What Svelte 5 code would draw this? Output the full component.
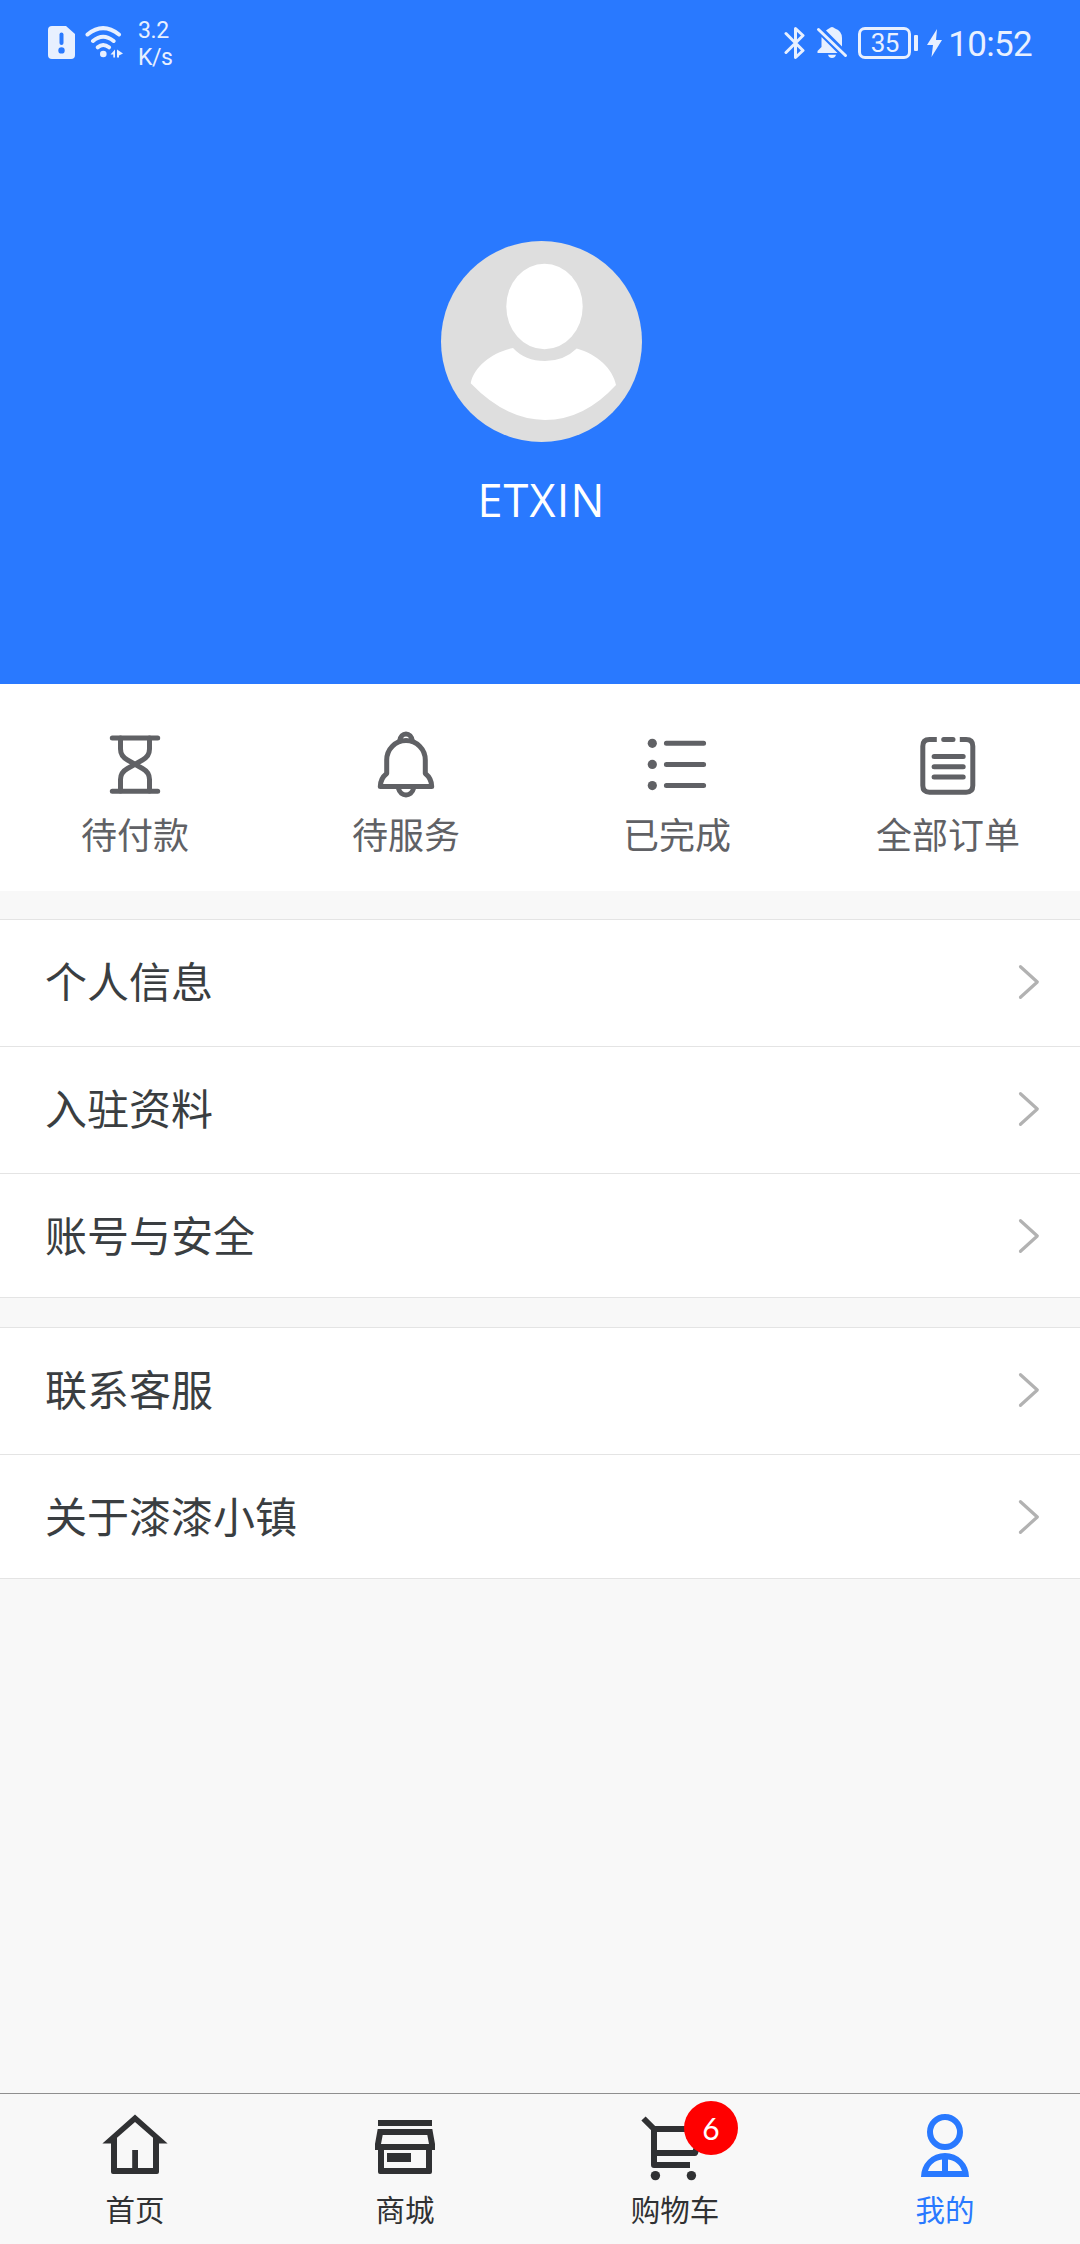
<script lang="ts">
  type Item = { icon: string; label: string };
  type Tab = Item & { badge?: number };

  const username = 'ETXIN';

  const orders: Item[] = [
    { icon: 'hourglass', label: '待付款' },
    { icon: 'bell', label: '待服务' },
    { icon: 'list', label: '已完成' },
    { icon: 'form', label: '全部订单' }
  ];

  const groups: string[][] = [
    ['个人信息', '入驻资料', '账号与安全'],
    ['联系客服', '关于漆漆小镇']
  ];

  const tabs: Tab[] = [
    { icon: 'home', label: '首页' },
    { icon: 'shop', label: '商城' },
    { icon: 'cart', label: '购物车', badge: 6 },
    { icon: 'mine', label: '我的' }
  ];

  let active = $state('mine');
</script>

{#snippet icon(name: string)}
  <svg class="icon" viewBox="0 0 72 72" width="72" height="72" aria-hidden="true">
    {#if name === 'hourglass'}
      <g class="line">
        <path d="M13.3 10H58.7M13.3 63.3H58.7" />
        <path d="M21.5 10V21C21.5 26 24 29.5 28.5 32L43.5 40.5C48 43 50.5 46.5 50.5 51.5V63M50.5 10V21C50.5 26 48 29.5 43.5 32L28.5 40.5C24 43 21.5 46.5 21.5 51.5V63" />
      </g>
    {:else if name === 'bell'}
      <g class="line">
        <path d="M16.7 32V45.5C12.3 49 10.3 52.5 10.3 58.6H61.7C61.7 52.5 59.7 49 55.3 45.5V32A19.3 19.5 0 0 0 16.7 32Z" />
        <path d="M29.7 13C30.5 3.5 41.5 3.5 42.3 13M28.5 60.5C30.5 69 41.5 69 43.5 60.5" />
      </g>
    {:else if name === 'list'}
      <g fill="currentColor">
        <circle cx="11.3" cy="15.3" r="4.6" />
        <circle cx="11.3" cy="36.4" r="4.6" />
        <circle cx="11.3" cy="57.6" r="4.6" />
      </g>
      <path class="line" d="M25.4 15.3H62.6M25.4 36.4H62.6M25.4 57.6H62.6" />
    {:else if name === 'form'}
      <path class="line butt" d="M24.8 11.5H17.5Q10.8 11.5 10.8 18.2V57.5Q10.8 64.2 17.5 64.2H54.1Q60.8 64.2 60.8 57.5V18.2Q60.8 11.5 54.1 11.5H47.8" />
      <path class="line" d="M31.7 11.5H41M22.1 28.6H51.2M22.1 38.8H51.2M22.1 49.1H51.2" />
    {:else if name === 'home'}
      <path
        fill="currentColor"
        fill-rule="evenodd"
        d="M36 4.6L68.6 33.4H60V62Q60 64 58 64H14Q12 64 12 62V33.4H3.4ZM36 12L18 27.8V58H33.2V40H39V58H54V27.8Z"
      />
    {:else if name === 'shop'}
      <path
        fill="currentColor"
        fill-rule="evenodd"
        d="M9 10H63V16H9ZM8.7 19H63.3L66 34V40H63V62Q63 64 61 64H11Q9 64 9 62V40H6V34ZM13.7 25L12 34H60L58.3 25ZM15 40V58H57V40ZM18 43H42V52H18Z"
      />
    {:else if name === 'cart'}
      <path class="bold" d="M4.5 8.5L15 19V55H51M15 19H64L56 43H15" />
      <circle cx="16.4" cy="65.6" r="4.7" fill="currentColor" />
      <circle cx="52.4" cy="65.6" r="4.7" fill="currentColor" />
    {:else if name === 'mine'}
      <circle class="bold" cx="36" cy="22" r="15" />
      <path
        fill="currentColor"
        fill-rule="evenodd"
        d="M12 67A24 24 0 0 1 60 67ZM19 61H33V49.5C26 50.5 21 54.5 19 61ZM39 49.5V61H53C51 54.5 46 50.5 39 49.5Z"
      />
    {/if}
  </svg>
{/snippet}

<div class="page">
  <header class="hero">
    <div class="status">
      <svg class="sim" viewBox="0 0 27 33" width="27" height="33">
        <path fill="currentColor" d="M4 0H18L27 8V29Q27 33 23 33H4Q0 33 0 29V4Q0 0 4 0Z" />
        <path class="mark" d="M13.5 8.5V17" />
        <circle class="dot" cx="13.5" cy="24.4" r="3.2" />
      </svg>
      <svg class="wifi" viewBox="0 0 40 33" width="40" height="33">
        <path class="arc" d="M2.5 8.5Q18 -4.3 34 8.5M8 15Q18 6.5 28.6 15M12.8 21.3Q18 16.6 24 21.3" />
        <circle cx="18.3" cy="28" r="3.3" fill="currentColor" />
        <path fill="currentColor" d="M30 23.5V31.5H28.3V28.5H25.5ZM32 23.5L38 27.5L34 29.5V31.5H32Z" />
      </svg>
      <div class="speed"><span>3.2</span><span>K/s</span></div>
      <div class="right">
        <svg class="bt" viewBox="0 0 22 34" width="22" height="34">
          <path d="M2 7.5L19 24.5L11.5 31.5V2.5L19 9.5L2 26.5" />
        </svg>
        <svg class="mute" viewBox="0 0 32 34" width="32" height="34">
          <path fill="currentColor" d="M10 4.5Q12 3.2 13 2.5Q16 -.5 19 2.5Q26 5 26 12V20.5ZM5.5 11L21.5 27H1.5V25L5.5 21ZM12 28.7H20Q19 32 16 32Q13 32 12 28.7Z" />
          <path class="slash" d="M2.5 3.5L29.5 29.5" />
        </svg>
        <div class="battery">35</div>
        <svg class="bolt" viewBox="0 0 15 28" width="15" height="28">
          <path fill="currentColor" d="M10 0L0 16H6L4.5 28L15 11H9Z" />
        </svg>
        <span class="time">10:52</span>
      </div>
    </div>

    <svg class="avatar" viewBox="0 0 201 201" width="201" height="201">
      <circle cx="100.5" cy="100.5" r="100.5" fill="#dedede" />
      <ellipse cx="103.5" cy="65.5" rx="38.2" ry="42.8" fill="#fff" />
      <path fill="#fff" d="M72 107C52 111 33 125 29.7 142.3Q65 179 104 179Q143 179 175 144C172 128 156 113 135.7 107.5Q123 120 104 120Q84 120 72 107Z" />
    </svg>
    <div class="name">{username}</div>
  </header>

  <section class="orders">
    {#each orders as item}
      <div class="order">
        {@render icon(item.icon)}
        <span>{item.label}</span>
      </div>
    {/each}
  </section>

  {#each groups as rows}
    <section class="group">
      {#each rows as row}
        <div class="row">
          <span>{row}</span>
          <svg class="arrow" viewBox="0 0 22 36" width="22" height="36">
            <path d="M2.5 2.7L19.3 18L2.5 33.3" />
          </svg>
        </div>
      {/each}
    </section>
  {/each}

  <nav class="tabbar">
    {#each tabs as tab}
      <button type="button" class="tab" class:active={active === tab.icon} onclick={() => (active = tab.icon)}>
        <span class="tab-icon">
          {@render icon(tab.icon)}
          {#if tab.badge}
            <span class="badge">{tab.badge}</span>
          {/if}
        </span>
        <span class="tab-label">{tab.label}</span>
      </button>
    {/each}
  </nav>
</div>

<style>
  :global(body) {
    margin: 0;
    background: #f8f8f8;
  }

  .page {
    display: flex;
    flex-direction: column;
    width: 1080px;
    height: 2244px;
    overflow: hidden;
    background: #f8f8f8;
    font-family: 'Noto Sans', 'Noto Sans CJK SC', sans-serif;
  }

  svg {
    display: block;
    flex: none;
  }

  .line,
  .bold {
    fill: none;
    stroke: currentColor;
    stroke-width: 5;
    stroke-linecap: round;
    stroke-linejoin: round;
  }

  .butt {
    stroke-linecap: butt;
  }

  .bold {
    stroke-width: 6;
    stroke-linecap: butt;
  }

  /* Header */
  .hero {
    display: flex;
    flex-direction: column;
    align-items: center;
    height: 684px;
    background: #2979ff;
    color: #fff;
  }

  .status {
    display: flex;
    align-items: center;
    box-sizing: border-box;
    width: 100%;
    height: 85px;
    padding: 0 48px;
    color: #e8f0ff;
    font-family: Roboto, sans-serif;
  }

  .mark {
    stroke: #2979ff;
    stroke-width: 4;
    stroke-linecap: round;
  }

  .dot {
    fill: #2979ff;
  }

  .wifi {
    margin-left: 10px;
  }

  .arc {
    fill: none;
    stroke: currentColor;
    stroke-width: 4;
    stroke-linecap: round;
  }

  .speed {
    display: flex;
    flex-direction: column;
    margin: 3px 0 0 13px;
    font-size: 23px;
    line-height: 27px;
    letter-spacing: -0.4px;
  }

  .right {
    display: flex;
    align-items: center;
    margin-left: auto;
  }

  .bt path {
    fill: none;
    stroke: currentColor;
    stroke-width: 3;
    stroke-linejoin: round;
    stroke-linecap: round;
  }

  .mute {
    margin-left: 10px;
  }

  .slash {
    stroke: currentColor;
    stroke-width: 3;
    stroke-linecap: round;
  }

  .battery {
    position: relative;
    box-sizing: border-box;
    width: 53px;
    height: 32px;
    margin-left: 10px;
    border: 3px solid currentColor;
    border-radius: 7px;
    font-size: 26px;
    line-height: 27px;
    letter-spacing: -0.5px;
    text-align: center;
  }

  .battery::after {
    content: '';
    position: absolute;
    top: 5px;
    right: -10px;
    width: 4px;
    height: 16px;
    border-radius: 1px;
    background: currentColor;
  }

  .bolt {
    margin-left: 16px;
  }

  .time {
    margin: 4px 0 0 6px;
    font-size: 35px;
    line-height: 40px;
    letter-spacing: -0.7px;
  }

  .avatar {
    margin: 156px 0 0 3px;
  }

  .name {
    margin-top: 28px;
    padding-left: 3px;
    font-family: 'Open Sans', sans-serif;
    font-size: 45px;
    line-height: 60px;
    letter-spacing: 1.2px;
  }

  /* Orders */
  .orders {
    display: grid;
    grid-template-columns: repeat(4, 271px);
    height: 207px;
    margin-left: -1px;
    background: #fff;
  }

  .order {
    display: flex;
    flex-direction: column;
    align-items: center;
    padding-top: 44px;
    color: #606165;
    font-size: 36px;
    line-height: 50px;
  }

  .order span {
    margin: 11px 0 0 1px;
    white-space: nowrap;
  }

  /* Menu */
  .group {
    margin-top: 28px;
    border-top: 1px solid #e4e4e4;
    border-bottom: 1px solid #e4e4e4;
    background: #fff;
  }

  .group + .group {
    margin-top: 29px;
  }

  .row {
    display: flex;
    align-items: center;
    justify-content: space-between;
    height: 123px;
    padding: 0 40px 3px 45px;
    border-bottom: 1px solid #e4e4e4;
    color: #3a3e41;
    font-size: 42px;
    line-height: 60px;
  }

  .row span {
    margin-top: 1px;
  }

  .row:last-child {
    padding-bottom: 0;
    border-bottom: none;
  }

  .arrow path {
    fill: none;
    stroke: #b2b2b2;
    stroke-width: 3.2;
    stroke-linecap: round;
    stroke-linejoin: round;
  }

  /* Tab bar */
  .tabbar {
    display: grid;
    grid-template-columns: repeat(4, 1fr);
    box-sizing: border-box;
    height: 151px;
    margin-top: auto;
    border-top: 1px solid #8f8f8f;
  }

  .tab {
    display: flex;
    flex-direction: column;
    align-items: center;
    padding: 16px 0 0;
    border: none;
    background: none;
    color: #303133;
    font: inherit;
  }

  .tab.active {
    color: #2979ff;
  }

  .tab-icon {
    position: relative;
  }

  .badge {
    position: absolute;
    top: -9px;
    left: 45px;
    width: 54px;
    height: 54px;
    border-radius: 50%;
    background: #f00;
    color: #fff;
    font-family: Lato, sans-serif;
    font-size: 30px;
    line-height: 54px;
    text-align: center;
  }

  .tab-label {
    margin-top: 8px;
    font-size: 29.5px;
    line-height: 40px;
  }
</style>
